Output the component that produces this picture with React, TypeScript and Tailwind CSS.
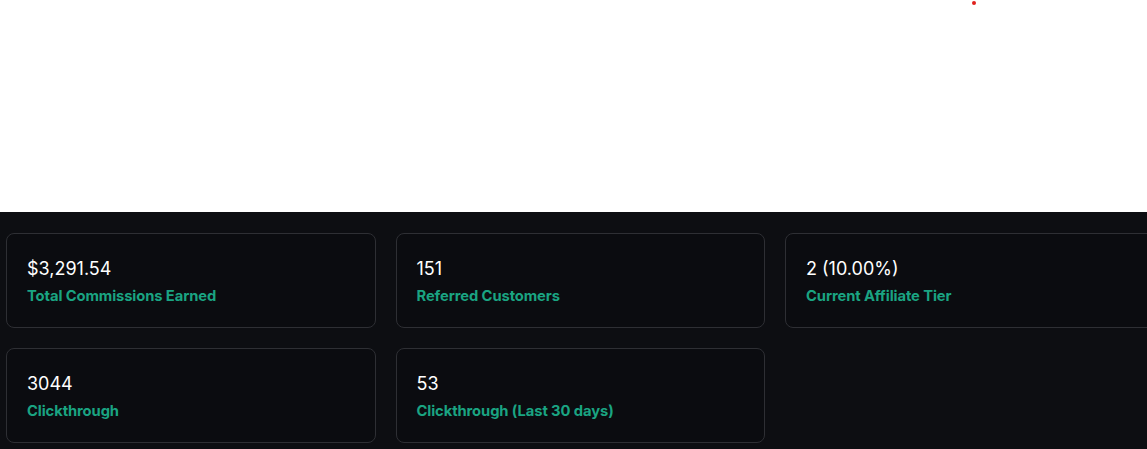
const stats = [
  [
    { value: '$3,291.54', label: 'Total Commissions Earned' },
    { value: '151', label: 'Referred Customers' },
    { value: '2 (10.00%)', label: 'Current Affiliate Tier' },
  ],
  [
    { value: '3044', label: 'Clickthrough' },
    { value: '53', label: 'Clickthrough (Last 30 days)' },
  ],
];

const StatCard = ({ value, label }: { value: string; label: string }) => (
  <div className="w-[369.5px] shrink-0 h-[95px] rounded-lg border border-[#2e2f34] bg-[#0b0c10] pl-[20px] pt-[23px]">
    <p className="text-[18px] leading-[24px] text-white">{value}</p>
    <p className="mt-[5px] text-[14.75px] leading-[20px] font-bold tracking-[-0.1px] text-[#1aa482]">{label}</p>
  </div>
);

export default function App() {
  return (
    <div className="relative w-[1147px] h-[449px] overflow-hidden bg-white font-['Inter',sans-serif]">
      {/* stray status dot */}
      <span className="absolute left-[972px] top-[1px] w-[4px] h-[4px] rounded-full bg-[#e0201c]" />

      <div className="h-[212px]" />

      <section className="h-[237px] bg-[#0d0e12] pl-[6px] pt-[21px] flex flex-col gap-[20px]">
        {stats.map((row, i) => (
          <div key={i} className="flex gap-[20px]">
            {row.map((s) => (
              <StatCard key={s.label} value={s.value} label={s.label} />
            ))}
          </div>
        ))}
      </section>
    </div>
  );
}
